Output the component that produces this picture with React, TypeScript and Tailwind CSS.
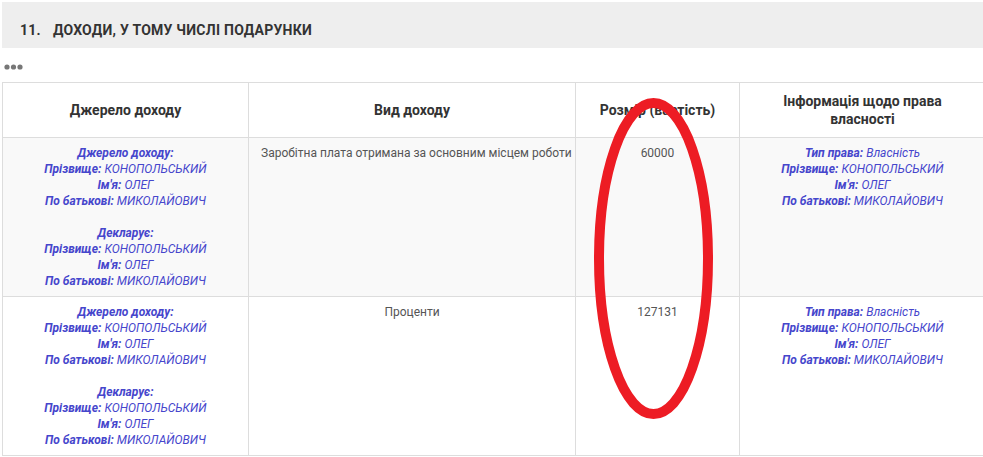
import React from "react";

type Person = { surname: string; name: string; patronymic: string };

const person: Person = {
  surname: "КОНОПОЛЬСЬКИЙ",
  name: "ОЛЕГ",
  patronymic: "МИКОЛАЙОВИЧ",
};

const rows = [
  { kind: "Заробітна плата отримана за основним місцем роботи", amount: "60000", left: true },
  { kind: "Проценти", amount: "127131", left: false },
];

function Field({ label, value }: { label: string; value?: string }) {
  return (
    <div>
      <b className="font-bold">{label}</b>
      {value ? <span> {value}</span> : null}
    </div>
  );
}

function PersonLines({ p }: { p: Person }) {
  return (
    <>
      <Field label="Прізвище:" value={p.surname} />
      <Field label="Ім'я:" value={p.name} />
      <Field label="По батькові:" value={p.patronymic} />
    </>
  );
}

export default function App() {
  return (
    <div className="relative w-[983px] h-[457px] overflow-hidden bg-white font-['Roboto',sans-serif]">
      <div className="pl-[2px] pt-[2px]">
        {/* Section title */}
        <div className="h-[46px] bg-[#eeeeee] flex items-center pl-[18px] pt-[11px] text-[14px] font-bold text-[#333] uppercase tracking-[0.25px]">
          <span>11.</span>
          <span className="ml-[12px]">Доходи, у тому числі подарунки</span>
        </div>

        {/* More dots */}
        <div className="h-[34px] flex items-center pl-[1px] pt-[4px]">
          <svg width="22" height="8" viewBox="0 0 22 8">
            <circle cx="4" cy="4" r="2.6" fill="#777" />
            <circle cx="10.5" cy="4" r="2.6" fill="#777" />
            <circle cx="17" cy="4" r="2.6" fill="#777" />
          </svg>
        </div>

        <table className="border-collapse table-fixed w-[983px] text-[12px] leading-4">
          <colgroup>
            <col className="w-[246px]" />
            <col className="w-[327px]" />
            <col className="w-[164px]" />
            <col className="w-[246px]" />
          </colgroup>
          <thead>
            <tr className="h-[55px]">
              <th className="border border-[#dddddd] text-[14px] leading-[18px] font-bold text-[#333] text-center align-middle px-3">Джерело доходу</th>
              <th className="border border-[#dddddd] text-[14px] leading-[18px] font-bold text-[#333] text-center align-middle px-3">Вид доходу</th>
              <th className="border border-[#dddddd] text-[14px] leading-[18px] font-bold text-[#333] text-center align-middle px-3">Розмір (вартість)</th>
              <th className="border border-[#dddddd] text-[14px] leading-[18px] font-bold text-[#333] text-center align-middle px-[26px]">Інформація щодо права власності</th>
            </tr>
          </thead>
          <tbody>
            {rows.map((r, i) => (
              <tr key={i} className={i % 2 === 0 ? "h-[159px] bg-[#f9f9f9]" : "h-[159px] bg-white"}>
                <td className="border border-[#dddddd] align-top text-center pt-[7px] px-2 italic text-[#4646cc]">
                  <Field label="Джерело доходу:" />
                  <PersonLines p={person} />
                  <div className="h-4" />
                  <Field label="Декларує:" />
                  <PersonLines p={person} />
                </td>
                <td className={"border border-[#dddddd] align-top pt-[7px] whitespace-nowrap text-[#555] " + (r.left ? "text-left pl-3 pr-[2px]" : "text-center px-3")}>
                  {r.kind}
                </td>
                <td className="border border-[#dddddd] align-top pt-[7px] px-3 text-center text-[#555]">{r.amount}</td>
                <td className="border border-[#dddddd] align-top text-center pt-[7px] px-2 italic text-[#4646cc]">
                  <Field label="Тип права:" value="Власність" />
                  <PersonLines p={person} />
                </td>
              </tr>
            ))}
          </tbody>
        </table>
      </div>

      {/* Red hand-drawn highlight */}
      <svg className="absolute left-0 top-0 pointer-events-none" width="983" height="457" viewBox="0 0 983 457">
        <ellipse cx="653.5" cy="258.5" rx="54.5" ry="155.5" fill="none" stroke="#ed1c24" strokeWidth="10" />
      </svg>
    </div>
  );
}
